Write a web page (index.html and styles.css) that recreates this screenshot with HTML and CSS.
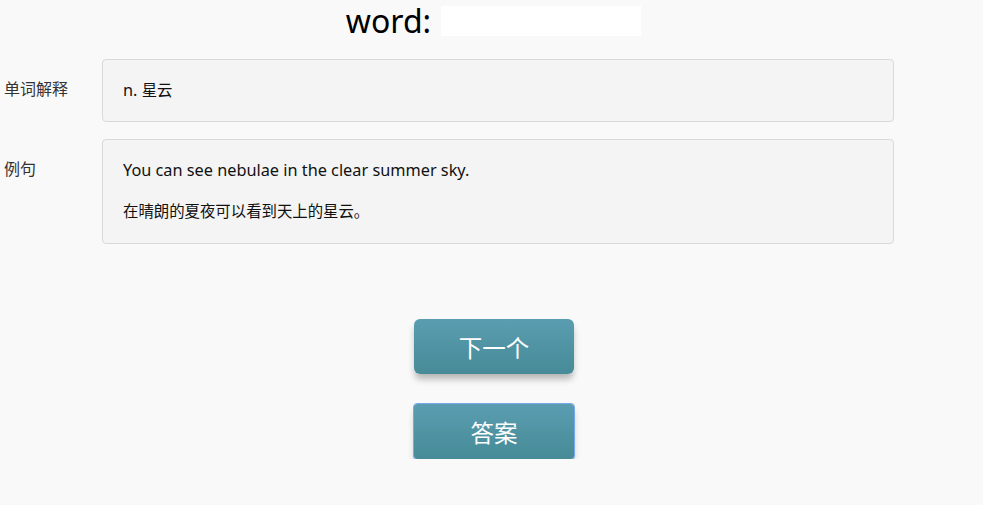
FILE: index.html
```html
<!DOCTYPE html>
<html lang="zh">
<head>
<meta charset="utf-8">
<link rel="stylesheet" href="styles.css">
</head>
<body>
<div class="page">
  <div class="title-row">
    <span class="title">word:</span>
    <input class="word-input" type="text">
  </div>
  <div class="form">
    <div class="label">单词解释</div>
    <div class="well well-def"><p>n. <span class="zh">星云</span></p></div>
    <div class="label">例句</div>
    <div class="well">
      <p>You can see nebulae in the clear summer sky.</p>
      <p class="zh">在晴朗的夏夜可以看到天上的星云。</p>
    </div>
  </div>
  <div class="actions">
    <button class="btn">下一个</button>
    <button class="btn btn-focus">答案</button>
  </div>
</div>
</body>
</html>
```

FILE: styles.css
```css
html, body {
  margin: 0;
  padding: 0;
  background: #f9f9f9;
}
body {
  font-family: "Noto Sans", "Noto Sans CJK SC", sans-serif;
  font-size: 16px;
  color: #111;
}
.page {
  width: 983px;
}
.title-row {
  display: flex;
  justify-content: center;
  align-items: center;
  gap: 10px;
  padding-top: 4px;
  height: 33px;
  padding-left: 4px;
}
.title {
  font-size: 32px;
  line-height: 31px;
  color: #000;
}
.word-input {
  width: 200px;
  height: 30px;
  box-sizing: border-box;
  border: none;
  background: #fff;
  margin-top: 0;
  padding: 0;
  outline: none;
}
.form {
  display: grid;
  grid-template-columns: 98px 792px;
  row-gap: 17px;
  padding-left: 4px;
  margin-top: 22px;
}
.label {
  font-size: 16px;
  line-height: 22px;
  color: #333;
  padding-top: 19px;
}
.well {
  background: #f4f4f4;
  border: 1px solid #d9d9d9;
  border-radius: 4px;
  padding: 19px 20px 20px;
}
.well p {
  margin: 0 0 20px;
  line-height: 22px;
  font-size: 16.3px;
  color: #111;
}
.well-def p {
  height: 22px;
  overflow: hidden;
}
.well p:last-child {
  margin-bottom: 0;
}
.well .zh {
  font-size: 15.4px;
}
.actions {
  display: flex;
  flex-direction: column;
  align-items: center;
  gap: 30px;
  margin-top: 75px;
  padding-left: 5px;
}
.btn {
  width: 160px;
  height: 55px;
  border: none;
  border-radius: 6px;
  background: linear-gradient(to bottom, #5a9db1, #468b97);
  color: #fff;
  font-family: "Noto Sans CJK SC", sans-serif;
  font-size: 23.5px;
  box-shadow: 0 6px 7px -1px rgba(0, 0, 0, 0.28);
  cursor: pointer;
  padding: 0;
}
.btn-focus {
  outline: 1px solid #7aa7ee;
  border-radius: 3px;
}
```
